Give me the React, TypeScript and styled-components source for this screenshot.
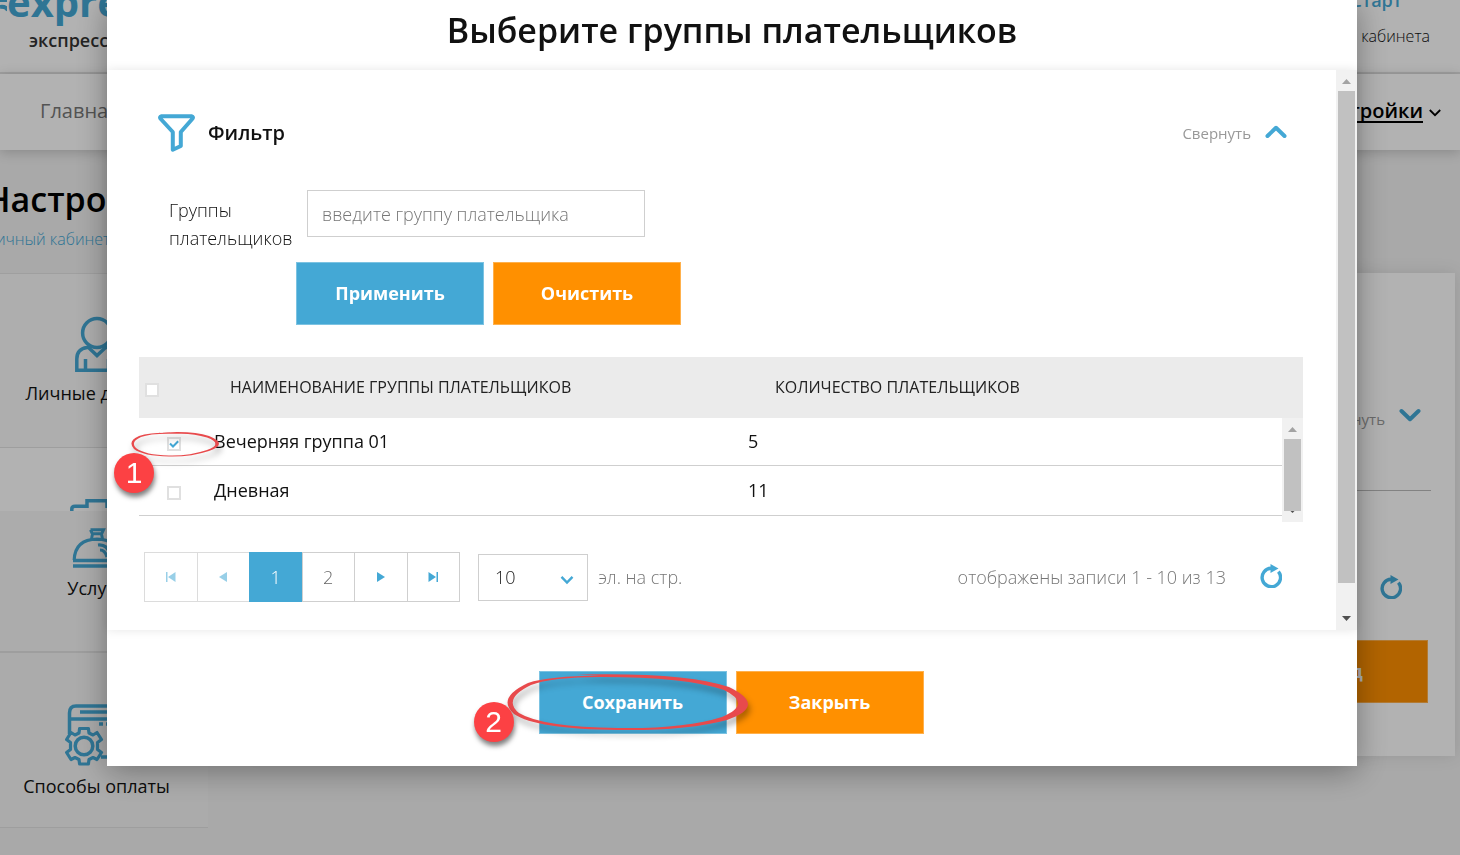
import React, { useState } from "react";
import styled, { createGlobalStyle } from "styled-components";

const blue = "#44a8d5";
const orange = "#ff9000";
const line = "#cfcfcf";

const GlobalStyle = createGlobalStyle`
  * { box-sizing: border-box; }
  html, body { margin: 0; padding: 0; }
  body {
    font-family: "Open Sans", "Noto Sans", sans-serif;
    font-size: 18px;
    color: #111;
    background: #f2f2f2;
    overflow: hidden;
  }
  button, input, select { font-family: inherit; }
`;

/* ---------- page behind the dialog ---------- */

const Page = styled.div`
  min-height: 100vh;
  overflow: hidden;
`;

const TopBar = styled.header`
  display: flex;
  justify-content: space-between;
  height: 74px;
  background: #fff;
  border-bottom: 2px solid #e4e4e4;
`;

const Brand = styled.div`
  display: flex;
  flex-direction: column;
  margin-top: -22px;
`;

const BrandName = styled.div`
  display: flex;
  align-items: center;
  height: 48px;
  font-size: 40px;
  line-height: 48px;
  font-weight: 700;
  color: ${blue};
`;

const BrandNote = styled.div`
  padding-left: 29px;
  font-size: 18px;
  line-height: 28px;
  font-weight: 600;
  color: #333;
`;

const Account = styled.div`
  display: flex;
  flex-direction: column;
  align-items: flex-end;
  margin-top: -14px;
  padding-right: 30px;
`;

const AccountName = styled.a`
  padding-right: 28px;
  font-size: 18px;
  line-height: 28px;
  font-weight: 600;
  color: ${blue};
  text-decoration: none;
`;

const ExitLink = styled.a`
  margin-top: 8px;
  font-size: 16px;
  line-height: 28px;
  font-weight: 300;
  color: #111;
  text-decoration: none;
`;

const MainNav = styled.nav`
  position: relative;
  display: flex;
  justify-content: space-between;
  align-items: center;
  height: 76px;
  padding: 0 19px 2px 40px;
  background: #fff;
  box-shadow: 0 2px 12px rgba(0, 0, 0, 0.2);
`;

const NavLink = styled.a<{ $current?: boolean }>`
  display: flex;
  align-items: center;
  gap: 6px;
  font-size: 20px;
  line-height: 28px;
  font-weight: ${(p) => (p.$current ? 600 : 400)};
  color: ${(p) => (p.$current ? "#000" : "#777")};
  text-decoration: none;
  span {
    text-decoration: ${(p) => (p.$current ? "underline" : "none")};
    text-decoration-thickness: 2px;
    text-underline-offset: 3px;
    text-decoration-skip-ink: none;
  }
  svg {
    margin-top: 4px;
  }
`;

const PageTitle = styled.h1`
  margin: 25px 0 0 -15px;
  font-size: 34px;
  line-height: 48px;
  font-weight: 600;
  color: #000;
`;

const Crumbs = styled.div`
  margin: 2px 0 0 -15px;
  font-size: 16px;
  line-height: 28px;
  a {
    color: ${blue};
    font-weight: 300;
    text-decoration: none;
  }
`;

const Columns = styled.div`
  display: flex;
  justify-content: space-between;
  align-items: flex-start;
  margin: 20px 5px 0 -15px;
`;

const SideMenu = styled.nav`
  display: flex;
  flex-direction: column;
  width: 223px;
`;

const SideItem = styled.a<{ $height: number; $white?: boolean; $bold?: boolean }>`
  display: flex;
  flex-direction: column;
  align-items: center;
  justify-content: flex-end;
  height: ${(p) => p.$height}px;
  padding-bottom: ${(p) => (p.$bold ? 49 : 27)}px;
  border-bottom: ${(p) => (p.$bold ? 2 : 1)}px solid #e2e2e2;
  background: ${(p) => (p.$white ? "linear-gradient(#fff 63px, #f7f7f7 63px)" : "#f5f5f5")};
  font-size: 18px;
  line-height: 28px;
  color: #111;
  text-decoration: none;
`;

const SideItemHigh = styled(SideItem)`
  padding-bottom: 40px;
  border-top: 1px solid #e4e4e4;
  background: #f9f9f9;
`;

const SideLabel = styled.span`
  margin-top: 6px;
`;

const Panel = styled.section`
  display: flex;
  flex-direction: column;
  width: 1200px;
  height: 483px;
  padding: 127px 24px 53px;
  background: #fff;
  box-shadow: 0 0 16px rgba(0, 0, 0, 0.1);
`;

const PanelToggle = styled.button`
  display: flex;
  align-items: center;
  align-self: flex-end;
  gap: 14px;
  margin-right: 10px;
  padding: 5px 0 0;
  border: 0;
  background: none;
  font-size: 15px;
  line-height: 28px;
  color: #999;
  svg {
    margin-bottom: 8px;
  }
`;

const PanelRule = styled.hr`
  width: 100%;
  margin: 57px 0 84px;
  border: 0;
  border-top: 1px solid #bbb;
`;

const PanelRefresh = styled.button`
  display: flex;
  align-self: flex-end;
  margin-right: 29px;
  padding: 0;
  border: 0;
  background: none;
`;

const PanelActions = styled.div`
  display: flex;
  justify-content: flex-end;
  margin-top: 41px;
  padding-right: 3px;
`;

/* ---------- dialog ---------- */

const Overlay = styled.div`
  position: fixed;
  inset: 0;
  padding: 0 103px 0 107px;
  background: rgba(0, 0, 0, 0.3);
`;

const Dialog = styled.div`
  position: relative;
  background: #fff;
  box-shadow: 0 5px 30px rgba(0, 0, 0, 0.35);
`;

const DialogTitle = styled.h2`
  margin: 0;
  padding: 6px 0 16px;
  font-size: 34px;
  line-height: 48px;
  font-weight: 600;
  text-align: center;
  color: #111;
`;

const Scroller = styled.div`
  display: flex;
  background: #fff;
  box-shadow: 0 0 10px rgba(0, 0, 0, 0.1);
`;

const Content = styled.div`
  flex: 1;
  min-width: 0;
  padding: 44px 33px 28px 32px;
`;

const Track = styled.div`
  display: flex;
  flex-direction: column;
  align-items: center;
  justify-content: space-between;
  width: 21px;
  background: #f1f1f1;
`;

const TableTrack = styled(Track)`
  position: absolute;
  top: 61px;
  right: 0;
  bottom: 0;
`;

const Arrow = styled.svg`
  display: block;
  flex: none;
  width: 21px;
  height: 21px;
`;

const Thumb = styled.div<{ $rest: number }>`
  flex: none;
  width: 17px;
  height: calc(100% - ${(p) => p.$rest}px);
  margin-bottom: auto;
  background: #c1c1c1;
`;

const FilterHead = styled.div`
  display: flex;
  align-items: center;
  height: 38px;
  margin: 0 16px 0 19px;
`;

const FilterTitle = styled.h3`
  flex: 1;
  margin: 0;
  padding-left: 13px;
  font-size: 20px;
  line-height: 28px;
  font-weight: 600;
  color: #111;
`;

const Collapse = styled.button`
  display: flex;
  align-items: center;
  gap: 14px;
  padding: 0;
  border: 0;
  background: none;
  font-size: 15px;
  line-height: 28px;
  color: #999;
  svg {
    margin-bottom: 2px;
  }
`;

const Field = styled.div`
  display: flex;
  align-items: flex-start;
  margin-top: 38px;
  padding-left: 30px;
`;

const FieldLabel = styled.label`
  width: 138px;
  padding: 6px 0 1px;
  font-size: 18px;
  line-height: 28px;
  font-weight: 300;
  color: #111;
`;

const TextInput = styled.input`
  width: 338px;
  height: 47px;
  padding: 0 14px;
  border: 1px solid ${line};
  border-radius: 0;
  outline: 0;
  font-size: 18px;
  font-weight: 300;
  color: #333;
  &::placeholder {
    color: #777;
    opacity: 1;
  }
`;

const Buttons = styled.div`
  display: flex;
  gap: 9px;
  margin: 9px 0 0 157px;
`;

const Button = styled.button<{ $tone: "blue" | "orange" }>`
  width: 188px;
  height: 63px;
  padding: 0 0 2px;
  border: 1px solid ${(p) => (p.$tone === "blue" ? "#7cc3e2" : "#ffb14d")};
  background: ${(p) => (p.$tone === "blue" ? blue : orange)};
  font-size: 18px;
  line-height: 28px;
  font-weight: 700;
  color: #fff;
`;

const TableBox = styled.div`
  position: relative;
  margin-top: 32px;
  padding-bottom: 6px;
`;

const Table = styled.table`
  width: 100%;
  table-layout: fixed;
  border-collapse: separate;
  border-spacing: 0;
`;

const HeadCell = styled.th<{ $pad: number }>`
  height: 61px;
  padding: 0 0 2px ${(p) => p.$pad}px;
  background: #ebebeb;
  font-size: 16px;
  line-height: 28px;
  font-weight: 500;
  text-align: left;
  text-transform: uppercase;
  color: #222;
`;

const Cell = styled.td<{ $pad?: number }>`
  padding: 0 0 2px ${(p) => p.$pad ?? 0}px;
  border-bottom: 1px solid ${line};
  font-size: 18px;
  line-height: 28px;
`;

const Row = styled.tr<{ $height: number }>`
  td { height: ${(p) => p.$height}px; }
`;

const Check = styled.input`
  display: block;
  appearance: none;
  width: 14px;
  height: 14px;
  margin: 7px 0 0;
  border: 2px solid #e0e0e0;
  background: #fff;
  &:checked {
    background: #fff
      url("data:image/svg+xml,%3Csvg xmlns='http://www.w3.org/2000/svg' viewBox='0 0 10 10'%3E%3Cpath d='M1 4.5 4 7.5 9.2 2.2' fill='none' stroke='%2344a8d5' stroke-width='2'/%3E%3C/svg%3E")
      center / 10px 10px no-repeat;
  }
`;

const PagerRow = styled.div`
  display: flex;
  align-items: center;
  margin: 30px 21px 0 5px;
  font-size: 18px;
  line-height: 28px;
  font-weight: 300;
  color: #777;
`;

const Pager = styled.div`
  display: flex;
  width: 316px;
`;

const PageButton = styled.button<{ $active?: boolean }>`
  display: flex;
  flex: 1;
  align-items: center;
  justify-content: center;
  height: 50px;
  padding: 0;
  border: 1px solid ${(p) => (p.$active ? blue : line)};
  background: ${(p) => (p.$active ? blue : "#fff")};
  font-size: 18px;
  font-weight: 300;
  color: ${(p) => (p.$active ? "#fff" : "#666")};
  & + & { margin-left: -1px; }
  &:disabled { border-color: #dcdcdc; }
  &:disabled svg { opacity: 0.55; }
`;

const SelectBox = styled.div`
  position: relative;
  margin: 0 10px 0 18px;
  svg {
    position: absolute;
    top: 21px;
    right: 14px;
    pointer-events: none;
  }
`;

const Select = styled.select`
  display: block;
  appearance: none;
  width: 110px;
  height: 47px;
  padding: 0 16px;
  border: 1px solid ${line};
  border-radius: 0;
  background: #fff;
  font-size: 18px;
  font-weight: 300;
  color: #222;
`;

const Shown = styled.span`
  flex: 1;
  padding-right: 34px;
  text-align: right;
`;

const IconButton = styled.button`
  display: flex;
  padding: 0 0 2px;
  border: 0;
  background: none;
`;

const Footer = styled.div`
  display: flex;
  justify-content: center;
  gap: 9px;
  padding: 41px 2px 32px 0;
`;

const Marked = styled.div`
  position: relative;
`;

/* ---------- step marks drawn over the dialog ---------- */

const Badge = styled.span<{ $left: number; $top: number }>`
  position: absolute;
  left: ${(p) => p.$left}px;
  top: ${(p) => p.$top}px;
  width: 40px;
  height: 40px;
  border-radius: 50%;
  background: #fc4144;
  box-shadow: 1px 4px 5px rgba(0, 0, 0, 0.5);
  font-family: "Liberation Sans", Arial, sans-serif;
  font-size: 30px;
  line-height: 40px;
  font-weight: 400;
  text-align: center;
  color: #fff;
`;

const Ring = styled.svg<{ $left: number; $top: number }>`
  position: absolute;
  left: ${(p) => p.$left}px;
  top: ${(p) => p.$top}px;
  overflow: visible;
  pointer-events: none;
  filter: drop-shadow(2px 5px 3px rgba(0, 0, 0, 0.35));
`;

/* ---------- icons ---------- */

const Chevron = ({ up }: { up?: boolean }) => (
  <svg width="22" height="14" viewBox="0 0 22 14" fill="none" stroke={blue} strokeWidth="4" strokeLinecap="round" strokeLinejoin="round">
    <path d={up ? "M2.5 11 11 2.8 19.5 11" : "M2.5 3 11 11.2 19.5 3"} />
  </svg>
);

const Refresh = () => (
  <svg width="22" height="24" viewBox="0 0 22 24" fill="none">
    <path d="M18.400 7.600A9.200 9.200 0 1 1 11 4.300" stroke={blue} strokeWidth="3.400" />
    <path d="M10.5 0 18.500 4.600 10.5 9Z" fill={blue} />
  </svg>
);

const Funnel = () => (
  <svg width="37" height="38" viewBox="0 0 37 38" fill="none" stroke={blue} strokeWidth="4" strokeLinejoin="round">
    <path d="M3.5 2.2H33.5Q36 2.8 34.2 5L22.8 18V32L14.8 35.700V18L2.8 5Q1 2.8 3.5 2.2Z" />
  </svg>
);

const PagerIcon = ({ kind }: { kind: "first" | "prev" | "next" | "last" }) => (
  <svg width="10" height="10" viewBox="0 0 10 10" fill={blue}>
    {kind === "first" && <path d="M0 0H1.5V10H0ZM9.5 0V10L2 5Z" />}
    {kind === "prev" && <path d="M9 0V10L1 5Z" />}
    {kind === "next" && <path d="M1 0V10L9 5Z" />}
    {kind === "last" && <path d="M0.5 0V10L8 5ZM8.5 0H10V10H8.5Z" />}
  </svg>
);

const Person = () => (
  <svg width="44" height="57" viewBox="0 0 44 57" fill="none" stroke={blue} strokeWidth="3.5">
    <circle cx="22" cy="17" r="14.4" />
    <path d="M16 31.500H12Q1.800 33 1.800 43V54.200H42.200V43Q42.200 33 32 31.500H28M10.5 43V54M33.5 43V54M14 32 22 39.5 30 32" />
  </svg>
);

const Dish = () => (
  <svg width="54" height="70" viewBox="0 0 54 70" fill="none" stroke={blue} strokeWidth="3.5">
    <path d="M1.800 13V11Q1.800 8.200 5 8.200H17V2.800H37V8.200H49Q52.200 8.200 52.200 11V13" />
    <path d="M20.500 31.800H33.500L31.500 36 32.500 41M20.500 31.800 22.500 36 21.500 41M22 35.800H32" strokeWidth="3" />
    <path d="M4.200 62Q5 41.500 27 41.200Q49 41.500 49.800 62M28 47Q37 46 40 56M30 52Q35 52 37 59" strokeWidth="3.200" />
    <path d="M3 62.600H51M3 68H51" />
  </svg>
);

const PayCard = () => (
  <svg width="64" height="62" viewBox="0 0 64 62" fill="none" stroke={blue} strokeWidth="3.5">
    <path d="M4.500 30V9Q4.500 2 11 2H60V53H36M4.500 15H60M15 8H55" />
    <path d="M34 20H38M41 20H45" />
    <circle cx="19" cy="42" r="8.800" />
    <path d="M14 29 14.600 24.500H23.400L24 29 28 31 32 28.500 36.500 35.500 32.500 38.500V45.500L36.500 48.500 32 55.500 28 53.500 24 55.500 23.400 60H14.600L14 55.500 10 53.500 6 55.500 1.600 48.500 5.500 45.500V38.500L1.600 35.500 6 28.500 10 31Z" strokeWidth="3.200" strokeLinejoin="round" />
  </svg>
);

const groups = [
  { name: "Вечерняя группа 01", count: 5, height: 48 },
  { name: "Дневная", count: 11, height: 50 },
];

export default function App() {
  const [picked, setPicked] = useState<Record<string, boolean>>({ [groups[0].name]: true });
  const toggle = (name: string) => setPicked((p) => ({ ...p, [name]: !p[name] }));

  return (
    <>
      <GlobalStyle />
      <Page>
        <TopBar>
          <Brand>
            <BrandName>
              <svg width="7" height="30" viewBox="0 0 7 30" fill="none" stroke={blue} strokeWidth="4">
                <path d="M0 13H8M0 20Q5 19 8 23" />
              </svg>
              express
            </BrandName>
            <BrandNote>экспресс</BrandNote>
          </Brand>
          <Account>
            <AccountName href="#account">Старт</AccountName>
            <ExitLink href="#exit">Выход из кабинета</ExitLink>
          </Account>
        </TopBar>
        <MainNav>
          <NavLink href="#home">Главная</NavLink>
          <NavLink href="#settings" $current>
            <span>Настройки</span>
            <svg width="12" height="8" viewBox="0 0 12 8" fill="none" stroke="#000" strokeWidth="1.800">
              <path d="M0.800 1 6 6.200 11.200 1" />
            </svg>
          </NavLink>
        </MainNav>
        <PageTitle>Настройки</PageTitle>
        <Crumbs>
          <a href="#cabinet">Личный кабинет</a>
        </Crumbs>
        <Columns>
          <SideMenu>
            <SideItemHigh href="#personal" $height={175}>
              <Person />
              <SideLabel>Личные данные</SideLabel>
            </SideItemHigh>
            <SideItem href="#services" $height={205} $white $bold>
              <Dish />
              <SideLabel>Услуги</SideLabel>
            </SideItem>
            <SideItem href="#payment" $height={175}>
              <PayCard />
              <SideLabel>Способы оплаты</SideLabel>
            </SideItem>
          </SideMenu>
          <Panel>
            <PanelToggle type="button">
              Развернуть
              <Chevron />
            </PanelToggle>
            <PanelRule />
            <PanelRefresh type="button" aria-label="Обновить">
              <Refresh />
            </PanelRefresh>
            <PanelActions>
              <Button type="button" $tone="orange">Назад</Button>
            </PanelActions>
          </Panel>
        </Columns>
      </Page>

      <Overlay>
        <Dialog role="dialog" aria-labelledby="dialog-title">
          <DialogTitle id="dialog-title">Выберите группы плательщиков</DialogTitle>
          <Scroller>
            <Content>
              <FilterHead>
                <Funnel />
                <FilterTitle>Фильтр</FilterTitle>
                <Collapse type="button">
                  Свернуть
                  <Chevron up />
                </Collapse>
              </FilterHead>
              <Field>
                <FieldLabel htmlFor="group">Группы плательщиков</FieldLabel>
                <TextInput id="group" type="text" placeholder="введите группу плательщика" />
              </Field>
              <Buttons>
                <Button type="button" $tone="blue">Применить</Button>
                <Button type="button" $tone="orange">Очистить</Button>
              </Buttons>
              <TableBox>
                <Table>
                  <colgroup>
                    <col style={{ width: 75 }} />
                    <col style={{ width: 534 }} />
                    <col />
                  </colgroup>
                  <thead>
                    <tr>
                      <HeadCell $pad={6}>
                        <Check type="checkbox" aria-label="Выбрать все" />
                      </HeadCell>
                      <HeadCell $pad={16}>Наименование группы плательщиков</HeadCell>
                      <HeadCell $pad={27}>Количество плательщиков</HeadCell>
                    </tr>
                  </thead>
                  <tbody>
                    {groups.map((g) => (
                      <Row key={g.name} $height={g.height}>
                        <Cell $pad={28}>
                          <Check
                            type="checkbox"
                            aria-label={g.name}
                            checked={!!picked[g.name]}
                            onChange={() => toggle(g.name)}
                          />
                        </Cell>
                        <Cell>{g.name}</Cell>
                        <Cell>{g.count}</Cell>
                      </Row>
                    ))}
                  </tbody>
                </Table>
                <TableTrack aria-hidden="true">
                  <Arrow viewBox="0 0 21 21"><path d="M6 14 10.500 9 15 14Z" fill="#a3a3a3" /></Arrow>
                  <Thumb $rest={32} />
                  <svg width="21" height="11" viewBox="0 0 21 11"><path d="M8.500 0H12.500L10.500 2Z" fill="#505050" /></svg>
                </TableTrack>
              </TableBox>
              <PagerRow>
                <Pager>
                  <PageButton type="button" disabled aria-label="Первая"><PagerIcon kind="first" /></PageButton>
                  <PageButton type="button" disabled aria-label="Предыдущая"><PagerIcon kind="prev" /></PageButton>
                  <PageButton type="button" $active>1</PageButton>
                  <PageButton type="button">2</PageButton>
                  <PageButton type="button" aria-label="Следующая"><PagerIcon kind="next" /></PageButton>
                  <PageButton type="button" aria-label="Последняя"><PagerIcon kind="last" /></PageButton>
                </Pager>
                <SelectBox>
                  <Select id="page-size" defaultValue="10">
                    <option value="10">10</option>
                    <option value="20">20</option>
                  </Select>
                  <svg width="14" height="10" viewBox="0 0 14 10" fill="none" stroke={blue} strokeWidth="2.400">
                    <path d="M1.500 1.800 7 7.500 12.500 1.800" />
                  </svg>
                </SelectBox>
                <label htmlFor="page-size">эл. на стр.</label>
                <Shown>отображены записи 1 - 10 из 13</Shown>
                <IconButton type="button" aria-label="Обновить">
                  <Refresh />
                </IconButton>
              </PagerRow>
            </Content>
            <Track aria-hidden="true">
              <Arrow viewBox="0 0 21 21"><path d="M6 14 10.500 9 15 14Z" fill="#a3a3a3" /></Arrow>
              <Thumb $rest={68} />
              <Arrow viewBox="0 0 21 21"><path d="M6 7H15L10.500 12Z" fill="#505050" /></Arrow>
            </Track>
          </Scroller>
          <Footer>
            <Marked>
              <Button type="button" $tone="blue">Сохранить</Button>
              <Ring $left={-33} $top={3} width="244" height="56" viewBox="0 0 244 56" fill="#e84a4c">
                <path fillRule="evenodd" d="M70 0.500Q180-2 223 13Q262 32 221 46Q180 57 112 56Q30 55 8 40Q-10 24 22 9Q42 2 95 1.500ZM95 3Q45 3 25 11Q-4 25 13 39Q36 53 112 54Q178 55 216 43Q247 30 218 16Q180 3 95 3Z" />
              </Ring>
              <Badge $left={-65} $top={31}>2</Badge>
            </Marked>
            <Button type="button" $tone="orange">Закрыть</Button>
          </Footer>
          <Ring $left={24} $top={431} width="90" height="26" viewBox="0 0 90 26" fill="#e84a4c">
            <path fillRule="evenodd" d="M26 2Q60-1 78 5Q98 13 78 20Q60 26 38 25.500Q12 25 3 18Q-4 10 8 5Q18 1 45 1.500ZM45 2.800Q20 2 10 6Q-1 11 5 17Q14 24 38 24.500Q58 25 76 19Q93 13 76 6.500Q62 2 45 2.800Z" />
          </Ring>
          <Badge $left={7} $top={453}>1</Badge>
        </Dialog>
      </Overlay>
    </>
  );
}
